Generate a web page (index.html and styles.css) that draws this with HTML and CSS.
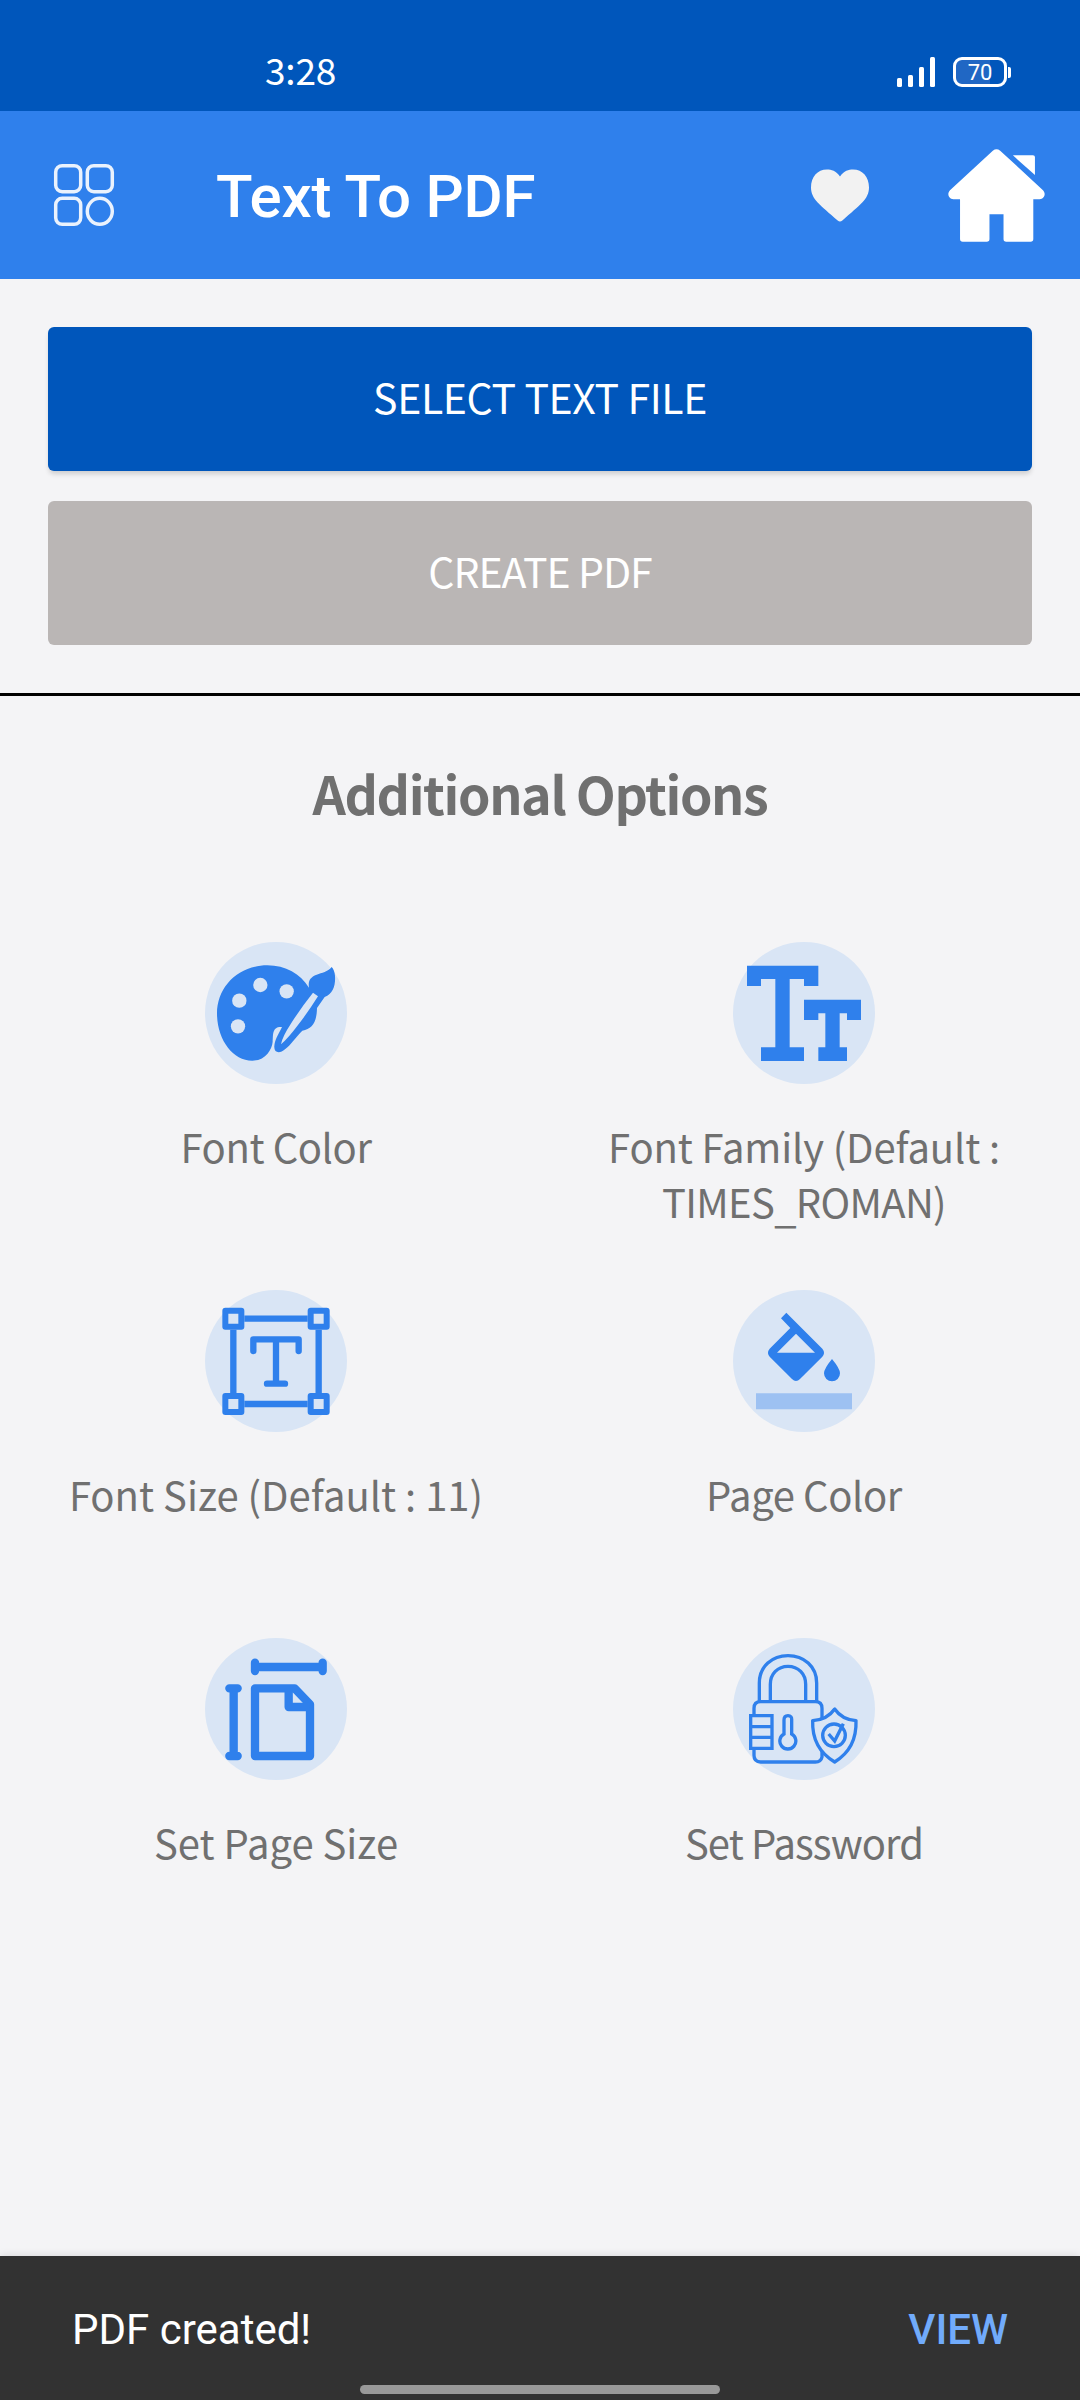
FILE: index.html
```
<!DOCTYPE html>
<html lang="en">
<head>
<meta charset="utf-8">
<title>Text To PDF</title>
<link rel="stylesheet" href="styles.css">
</head>
<body>
<div class="screen">
  <div class="status">
    <span class="clock">3:28</span>
    <div class="indicators">
      <svg class="signal" viewBox="0 0 38 30"><rect x="0" y="21" width="5" height="9" rx="1.5"/><rect x="11" y="18" width="5" height="12" rx="1.5"/><rect x="22" y="10" width="5" height="20" rx="1.5"/><rect x="33" y="0" width="5" height="30" rx="1.5"/></svg>
      <div class="battery">70</div>
      <span class="battery-tip"></span>
    </div>
  </div>

  <header class="toolbar">
    <svg class="menu" viewBox="0 0 60 62"><rect x="1.7" y="1.7" width="25" height="26" rx="6.5"/><rect x="33.3" y="1.7" width="25" height="26" rx="6.5"/><rect x="1.7" y="34.3" width="25" height="26" rx="6.5"/><ellipse cx="45.8" cy="47.3" rx="12.5" ry="13"/></svg>
    <h1 class="title">Text To PDF</h1>
    <svg class="heart" viewBox="93 416 174 158"><path d="M180 438C192 420 206 417 219 417C248 417 267 440 267 471C267 506 240 523 187 570Q180 576 173 570C120 523 93 506 93 471C93 440 112 417 141 417C154 417 168 420 180 438Z"/></svg>
    <svg class="home" viewBox="503 356 290 278"><path d="M637 361Q648 353 659 361L787 479C797 489 791 506 777 506H758V625Q758 633 750 633H677Q669 633 669 625V551H627V625Q627 633 619 633H547Q539 633 539 625V506H519C505 506 499 489 509 479Z"/><path d="M697 375H757Q763 375 763 381V434Z"/></svg>
  </header>

  <section class="actions">
    <button class="btn btn-primary">SELECT TEXT FILE</button>
    <button class="btn btn-disabled">CREATE PDF</button>
  </section>

  <main class="options">
    <h2 class="heading">Additional Options</h2>
    <div class="grid">
      <div class="option">
        <div class="disc"><svg viewBox="45 66 426 426">
          <path class="fill" fill-rule="evenodd" d="M357 203C331 162 287 136 232 136C142 136 81 203 81 280C81 357 127 422 187 422C226 422 246 389 248 365C250 345 245 319 276 321C264 345 254 361 253 378C251 399 269 402 285 388C303 374 319 350 337 332C366 327 380 309 381 264L404 231C430 222 437 195 435 167Q433 149 425 141C413 156 396 158 380 164C359 172 354 184 357 203ZM369 218L384 229Q356 274 324 315Q295 354 273 373Q276 352 304 309Q336 259 369 218Z"/>
          <g class="hole"><circle cx="211" cy="195" r="21.5"/><circle cx="290" cy="214" r="21.5"/><circle cx="148" cy="242" r="21.5"/><circle cx="144" cy="319" r="21.5"/></g>
        </svg></div>
        <p class="label tight">Font Color</p>
      </div>
      <div class="option">
        <div class="disc"><svg viewBox="69 66 426 426">
          <path class="fill" d="M111 137H325V198H282V177H239V382H282V423H153V382H196V177H153V198H111ZM282 239H453V300H411V280H389V382H411V423H325V382H346V280H325V300H282Z"/>
        </svg></div>
        <p class="label family">Font Family (Default :<br><span class="family-name">TIMES<span class="low">_</span>ROMAN)</span></p>
      </div>
      <div class="option">
        <div class="disc"><svg viewBox="45 59 426 426">
          <g class="line" stroke-width="19"><path d="M163 145H353M163 401H353M130 178V368M386 178V368"/><path d="M190 242V207H326V242M258 207V340M231 340H285" stroke-linecap="round" stroke-linejoin="round"/><g stroke-width="18" stroke-linejoin="round"><rect x="106" y="121" width="48" height="48"/><rect x="362" y="121" width="48" height="48"/><rect x="106" y="377" width="48" height="48"/><rect x="362" y="377" width="48" height="48"/></g></g>
        </svg></div>
        <p class="label">Font Size (Default : 11)</p>
      </div>
      <div class="option">
        <div class="disc"><svg viewBox="69 59 426 426">
          <path class="fill" fill-rule="evenodd" d="M229 127L337 235Q347 247 337 259L270 326Q258 338 246 326L179 259Q169 247 179 235L241 173L213 144ZM258 190L201 247H315ZM366 266Q390 295 390 309A24 24 0 0 1 342 309Q342 295 366 266Z"/>
          <path class="bar" d="M138 369H426V417H138Z"/>
        </svg></div>
        <p class="label tight">Page Color</p>
      </div>
      <div class="option">
        <div class="disc"><svg viewBox="45 53 426 426">
          <g class="line" stroke-width="25" stroke-linecap="round" stroke-linejoin="round"><path d="M195 127V152M398 127V152M195 140H398M118 204H143M118 407H143M131 204V407M195 204H314L360 252V407H195Z"/><path d="M296 204V260H358" stroke-linecap="butt"/></g>
        </svg></div>
        <p class="label">Set Page Size</p>
      </div>
      <div class="option">
        <div class="disc"><svg viewBox="69 53 426 426">
          <g class="line" stroke-width="10"><path d="M148 244V188C148 138 187 106 234 106S320 138 320 188V244M181 244V192C181 161 203 138 234 138S287 161 287 192V244"/><path d="M132 286V264Q132 244 152 244H316Q336 244 336 264V294M132 384V405Q132 425 152 425H316Q333 425 336 410V392"/><path d="M122 286H186V384H122ZM122 319H186M122 351H186M222 341V299Q222 286 234 286T245 299V341A24 24 0 1 1 222 341Z"/><path d="M374 266Q352 298 308 301Q305 384 374 425Q441 384 438 301Q396 298 374 266Z" stroke-linejoin="round"/><circle cx="372" cy="345" r="34"/><path d="M356 341L374 362L400 310"/></g>
        </svg></div>
        <p class="label tighter">Set Password</p>
      </div>
    </div>
  </main>

  <footer class="snackbar">
    <span class="message">PDF created!</span>
    <span class="view">VIEW</span>
    <span class="handle"></span>
  </footer>
</div>
</body>
</html>
```
FILE: styles.css
```
* { box-sizing: border-box; margin: 0; padding: 0; }
body { background: #f4f4f6; font-family: "Noto Sans CJK JP", "Noto Sans", sans-serif; }
svg { display: block; overflow: visible; }
.screen { width: 1080px; height: 2400px; display: flex; flex-direction: column; }

.status { height: 111px; background: #0056bb; color: #fff; display: flex; justify-content: space-between; padding: 49px 69px 0 265px; }
.clock { font-size: 37px; line-height: 41px; letter-spacing: -0.2px; }
.indicators { display: flex; align-items: center; height: 30px; margin-top: 8px; }
.signal { width: 38px; height: 30px; fill: #fff; margin-right: 18px; }
.battery { width: 54px; height: 30px; border: 3px solid #fff; border-radius: 9px; background: linear-gradient(90deg, #2067c4 70%, transparent 70%); font: 400 22px/25px Roboto, sans-serif; text-align: center; }
.battery-tip { width: 3px; height: 11px; margin-left: 1px; border-radius: 0 2px 2px 0; background: #fff; }

.toolbar { height: 168px; background: #2f80ec; display: flex; align-items: center; padding: 0 35px 0 54px; }
.menu { width: 60px; height: 62px; fill: none; stroke: #eaf2fd; stroke-width: 3.5; }
.title { flex: 1; margin-left: 102px; padding-top: 4px; font: 500 60px/70px Roboto, sans-serif; letter-spacing: -0.2px; color: #fff; }
.heart { width: 58px; height: 53px; fill: #f2f2f2; }
.home { width: 97px; height: 93px; margin-left: 79px; fill: #fff; }

.actions { height: 417px; padding: 48px; border-bottom: 3px solid #000; display: flex; flex-direction: column; gap: 30px; }
.btn { height: 144px; padding-bottom: 6px; border: 0; border-radius: 6px; color: #fff; font: 400 41px/60px "Noto Sans CJK JP", sans-serif; letter-spacing: -0.4px; }
.btn-primary { background: #0056bb; box-shadow: 0 4px 5px -1px rgba(0, 0, 0, 0.16); }
.btn-disabled { background: #bab6b5; letter-spacing: -1px; }

.options { flex: 1; padding: 59px 12px 0; color: #707070; }
.heading { font-size: 52px; line-height: 76px; font-weight: 700; letter-spacing: -1.4px; text-align: center; }
.grid { display: grid; grid-template-columns: 528px 528px; grid-auto-rows: 348px; margin-top: 111px; }
.option { display: flex; flex-direction: column; align-items: center; }
.disc { width: 142px; height: 142px; border-radius: 50%; background: #d9e5f5; }
.disc svg { width: 142px; height: 142px; }
.fill { fill: #2f80ec; }
.hole { fill: #d9e5f5; }
.line { fill: none; stroke: #2f80ec; }
.bar { fill: #9dc1f2; }
.label { margin-top: 35px; font-size: 40px; line-height: 55px; text-align: center; white-space: nowrap; }
.tight { letter-spacing: -0.4px; }
.tighter { letter-spacing: -0.9px; }
.family { letter-spacing: -0.15px; }
.family-name { letter-spacing: -0.7px; }
.low { line-height: 0; vertical-align: -5px; }

.snackbar { position: relative; height: 144px; padding: 4px 72px 0 72px; display: flex; align-items: center; justify-content: space-between; background: #323232; box-shadow: 0 -1px 8px rgba(0, 0, 0, 0.1); color: #fff; font: 400 42px/50px Roboto, sans-serif; }
.view { color: #71abfb; font-weight: 500; }
.handle { position: absolute; left: 360px; top: 129px; width: 360px; height: 9px; border-radius: 5px; background: #999; }
```
